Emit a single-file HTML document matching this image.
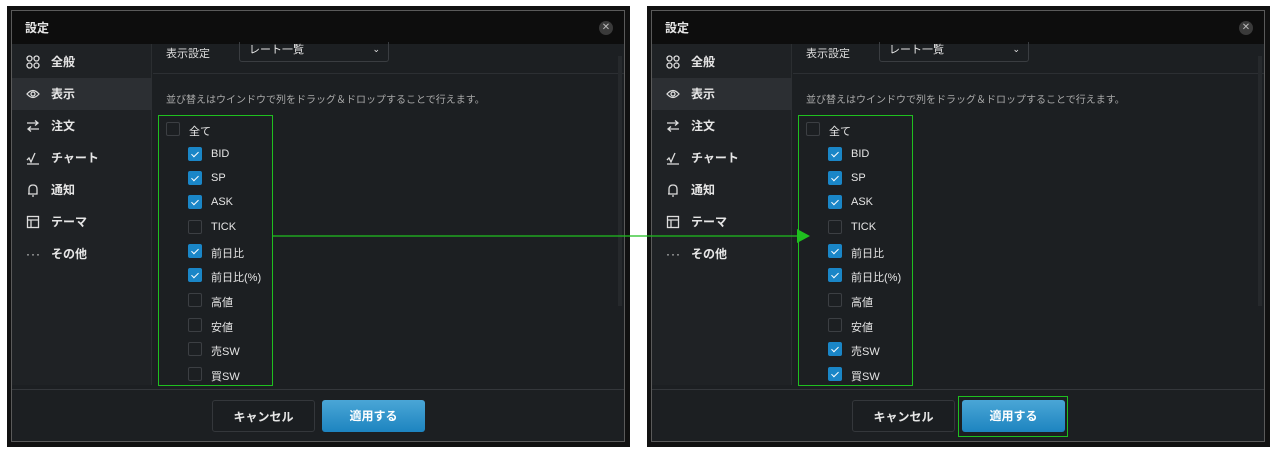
<!DOCTYPE html>
<html><head><meta charset="utf-8"><style>
*{margin:0;padding:0;box-sizing:border-box}
body{width:1280px;height:453px;background:#fff;position:relative;overflow:hidden;font-family:"Liberation Sans","Noto Sans CJK JP",sans-serif;color:#e6e6e6}
.p{position:absolute;top:6px;width:623px;height:441px;background:#111}
.in{position:absolute;left:4px;top:4px;right:5px;bottom:5px;border:1px solid #5a5a5a;background:#1c1f22;overflow:hidden}
.tb{position:absolute;left:0;top:0;right:0;height:33px;background:#0d0d0d}
.tt{position:absolute;left:13px;top:8px;font-size:12px;font-weight:bold}
.cl{position:absolute;right:11px;top:10px;width:14px;height:14px;border-radius:50%;background:#3a3a3a;color:#bbb;font-size:10px;line-height:14px;text-align:center}
.sb{position:absolute;left:0;top:33px;width:140px;bottom:56px;background:#1f2225;border-right:1px solid #2b2e31}
.it{position:absolute;left:0;width:140px;height:32px;font-size:12px;font-weight:bold;line-height:32px}
.it .ic{position:absolute;left:14px;top:9px;width:14px;height:14px}
.it span{position:absolute;left:39px}
.sel{background:#2c2f33}
.sep{position:absolute;left:141px;right:0;top:62px;height:1px;background:#2c2f33}
.lbl{position:absolute;font-size:11px;color:#ddd}
.selb{position:absolute;left:227px;top:31px;width:150px;height:20px;border:1px solid #3a3d41;border-top:none;border-radius:0 0 3px 3px;font-size:11px;padding-left:9px;line-height:16px}
.note{position:absolute;left:154px;top:80px;font-size:10px;color:#aaa}
.gb{position:absolute;left:146px;top:104px;width:115px;height:271px;border:1px solid #1fbf1f}
.cb{position:absolute;width:14px;height:14px;border:1px solid #3c3f43;border-radius:2px;background:#1c1f22}
.cb.on{background:#1a86c7;border-color:#1a86c7}
.cb.on:after{content:"";position:absolute;left:4px;top:2px;width:3px;height:6px;border:solid #fff;border-width:0 1.3px 1.3px 0;transform:rotate(45deg)}
.cl2{position:absolute;font-size:11px;color:#e6e6e6;margin-top:1px}
.scr{position:absolute;right:2px;top:45px;width:4px;height:250px;background:#26292c}
.ft{position:absolute;left:0;right:0;top:378px;height:1px;background:#34373b}
.bt{position:absolute;top:389px;width:103px;height:32px;border-radius:3px;font-size:12px;font-weight:bold;text-align:center;line-height:32px}
.cn{left:200px;border:1px solid #34373b;background:#1b1e21}
.ap{left:310px;background:linear-gradient(#4aa6d6,#1d84c0);color:#fff}
</style></head><body>

<div class="p" style="left:7px"><div class="in">
<div class="tb"><div class="tt">設定</div><div class="cl">✕</div></div>
<div class="sb">
<div class="it" style="top:2px"><svg class="ic" viewBox="0 0 14 14" fill="none" stroke="#ddd" stroke-width="1.3"><circle cx="3.5" cy="3.5" r="2.5"/><circle cx="10.5" cy="3.5" r="2.5"/><circle cx="3.5" cy="10.5" r="2.5"/><circle cx="10.5" cy="10.5" r="2.5"/></svg><span>全般</span></div>
<div class="it sel" style="top:34px"><svg class="ic" viewBox="0 0 14 14" fill="none" stroke="#ddd" stroke-width="1.3"><path d="M1 7Q7 0 13 7Q7 14 1 7Z"/><circle cx="7" cy="7" r="2"/></svg><span>表示</span></div>
<div class="it" style="top:66px"><svg class="ic" viewBox="0 0 14 14" fill="none" stroke="#ddd" stroke-width="1.3"><path d="M1 4H12M9 1.5L12 4L9 6.5M13 10H2M5 7.5L2 10L5 12.5"/></svg><span>注文</span></div>
<div class="it" style="top:98px"><svg class="ic" viewBox="0 0 14 14" fill="none" stroke="#ddd" stroke-width="1.3"><path d="M1 9L3 7L5 11L9 2M1 13H13"/></svg><span>チャート</span></div>
<div class="it" style="top:130px"><svg class="ic" viewBox="0 0 14 14" fill="none" stroke="#ddd" stroke-width="1.3"><path d="M3 11V6Q3 2 7 2Q11 2 11 6V11H2M12 11M6 13H8"/></svg><span>通知</span></div>
<div class="it" style="top:162px"><svg class="ic" viewBox="0 0 14 14" fill="none" stroke="#ddd" stroke-width="1.3"><rect x="1.5" y="1.5" width="11" height="11"/><path d="M1.5 5H12.5M5 5V12.5"/></svg><span>テーマ</span></div>
<div class="it" style="top:194px"><span style="left:14px;letter-spacing:1px;font-weight:normal">···</span><span>その他</span></div>
</div>
<div class="lbl" style="left:154px;top:34px">表示設定</div>
<div class="selb">レート一覧<span style="position:absolute;right:8px;top:-1px;font-size:9px">⌄</span></div>
<div class="sep"></div>
<div class="note">並び替えはウインドウで列をドラッグ＆ドロップすることで行えます。</div>
<div class="scr"></div>
<div class="gb"></div>
<div class="cb" style="left:154px;top:111px"></div><div class="cl2" style="left:177px;top:111px">全て</div>
<div class="cb on" style="left:176px;top:136px"></div><div class="cl2" style="left:199px;top:136px">BID</div>
<div class="cb on" style="left:176px;top:160px"></div><div class="cl2" style="left:199px;top:160px">SP</div>
<div class="cb on" style="left:176px;top:184px"></div><div class="cl2" style="left:199px;top:184px">ASK</div>
<div class="cb" style="left:176px;top:209px"></div><div class="cl2" style="left:199px;top:209px">TICK</div>
<div class="cb on" style="left:176px;top:233px"></div><div class="cl2" style="left:199px;top:233px">前日比</div>
<div class="cb on" style="left:176px;top:257px"></div><div class="cl2" style="left:199px;top:257px">前日比(%)</div>
<div class="cb" style="left:176px;top:282px"></div><div class="cl2" style="left:199px;top:282px">高値</div>
<div class="cb" style="left:176px;top:307px"></div><div class="cl2" style="left:199px;top:307px">安値</div>
<div class="cb" style="left:176px;top:331px"></div><div class="cl2" style="left:199px;top:331px">売SW</div>
<div class="cb" style="left:176px;top:356px"></div><div class="cl2" style="left:199px;top:356px">買SW</div>
<div class="ft"></div>
<div class="bt cn">キャンセル</div><div class="bt ap">適用する</div>
</div></div>

<div class="p" style="left:647px"><div class="in">
<div class="tb"><div class="tt">設定</div><div class="cl">✕</div></div>
<div class="sb">
<div class="it" style="top:2px"><svg class="ic" viewBox="0 0 14 14" fill="none" stroke="#ddd" stroke-width="1.3"><circle cx="3.5" cy="3.5" r="2.5"/><circle cx="10.5" cy="3.5" r="2.5"/><circle cx="3.5" cy="10.5" r="2.5"/><circle cx="10.5" cy="10.5" r="2.5"/></svg><span>全般</span></div>
<div class="it sel" style="top:34px"><svg class="ic" viewBox="0 0 14 14" fill="none" stroke="#ddd" stroke-width="1.3"><path d="M1 7Q7 0 13 7Q7 14 1 7Z"/><circle cx="7" cy="7" r="2"/></svg><span>表示</span></div>
<div class="it" style="top:66px"><svg class="ic" viewBox="0 0 14 14" fill="none" stroke="#ddd" stroke-width="1.3"><path d="M1 4H12M9 1.5L12 4L9 6.5M13 10H2M5 7.5L2 10L5 12.5"/></svg><span>注文</span></div>
<div class="it" style="top:98px"><svg class="ic" viewBox="0 0 14 14" fill="none" stroke="#ddd" stroke-width="1.3"><path d="M1 9L3 7L5 11L9 2M1 13H13"/></svg><span>チャート</span></div>
<div class="it" style="top:130px"><svg class="ic" viewBox="0 0 14 14" fill="none" stroke="#ddd" stroke-width="1.3"><path d="M3 11V6Q3 2 7 2Q11 2 11 6V11H2M12 11M6 13H8"/></svg><span>通知</span></div>
<div class="it" style="top:162px"><svg class="ic" viewBox="0 0 14 14" fill="none" stroke="#ddd" stroke-width="1.3"><rect x="1.5" y="1.5" width="11" height="11"/><path d="M1.5 5H12.5M5 5V12.5"/></svg><span>テーマ</span></div>
<div class="it" style="top:194px"><span style="left:14px;letter-spacing:1px;font-weight:normal">···</span><span>その他</span></div>
</div>
<div class="lbl" style="left:154px;top:34px">表示設定</div>
<div class="selb">レート一覧<span style="position:absolute;right:8px;top:-1px;font-size:9px">⌄</span></div>
<div class="sep"></div>
<div class="note">並び替えはウインドウで列をドラッグ＆ドロップすることで行えます。</div>
<div class="scr"></div>
<div class="gb"></div>
<div class="cb" style="left:154px;top:111px"></div><div class="cl2" style="left:177px;top:111px">全て</div>
<div class="cb on" style="left:176px;top:136px"></div><div class="cl2" style="left:199px;top:136px">BID</div>
<div class="cb on" style="left:176px;top:160px"></div><div class="cl2" style="left:199px;top:160px">SP</div>
<div class="cb on" style="left:176px;top:184px"></div><div class="cl2" style="left:199px;top:184px">ASK</div>
<div class="cb" style="left:176px;top:209px"></div><div class="cl2" style="left:199px;top:209px">TICK</div>
<div class="cb on" style="left:176px;top:233px"></div><div class="cl2" style="left:199px;top:233px">前日比</div>
<div class="cb on" style="left:176px;top:257px"></div><div class="cl2" style="left:199px;top:257px">前日比(%)</div>
<div class="cb" style="left:176px;top:282px"></div><div class="cl2" style="left:199px;top:282px">高値</div>
<div class="cb" style="left:176px;top:307px"></div><div class="cl2" style="left:199px;top:307px">安値</div>
<div class="cb on" style="left:176px;top:331px"></div><div class="cl2" style="left:199px;top:331px">売SW</div>
<div class="cb on" style="left:176px;top:356px"></div><div class="cl2" style="left:199px;top:356px">買SW</div>
<div class="ft"></div>
<div class="bt cn">キャンセル</div><div class="bt ap">適用する</div>
<div style="position:absolute;left:306px;top:385px;width:110px;height:41px;border:1.5px solid #1fbf1f"></div>
</div></div>

<svg style="position:absolute;left:0;top:0" width="1280" height="453"><path d="M272 236H800" stroke="#1fbf1f" stroke-width="1.2"/><path d="M797 229L810 236L797 243Z" fill="#1fbf1f"/></svg>
</body></html>
